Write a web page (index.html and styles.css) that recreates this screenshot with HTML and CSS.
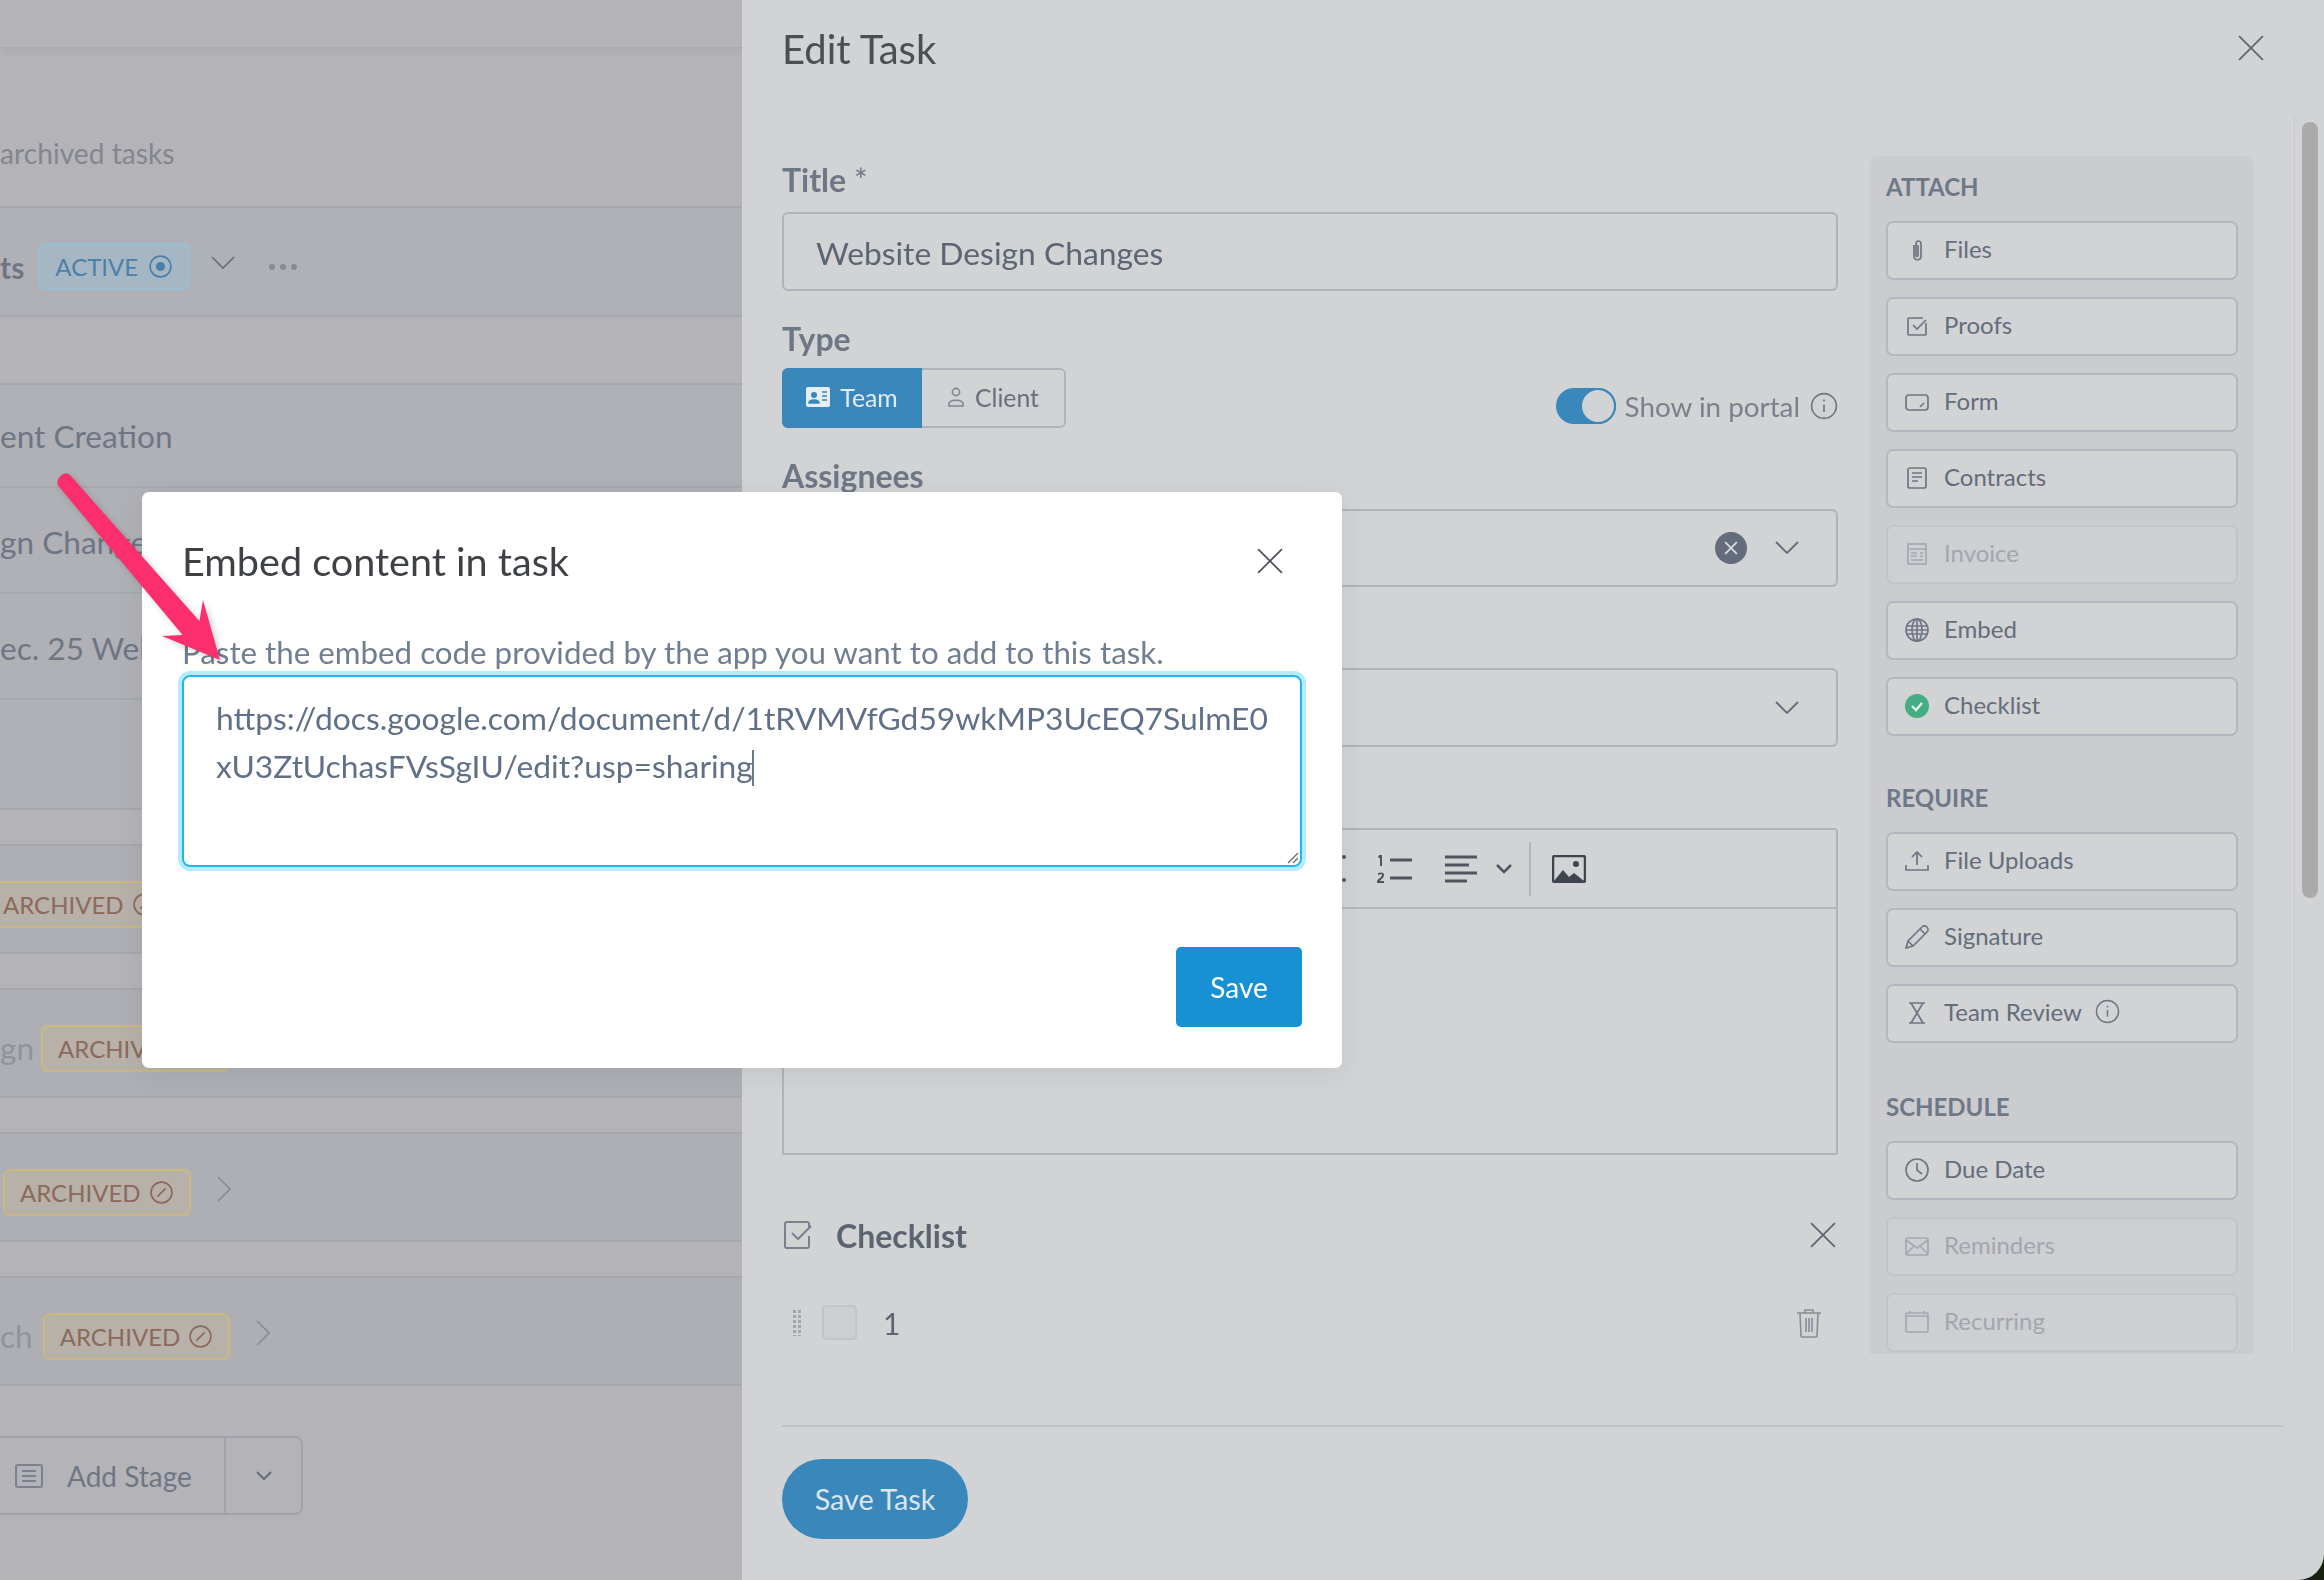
FILE: index.html
```html
<!DOCTYPE html>
<html lang="en">
<head>
<meta charset="utf-8">
<title>Edit Task</title>
<link rel="stylesheet" href="styles.css">
</head>
<body>
<div class="shell">
  <section class="board">
    <div class="board-top"></div>
    <div class="board-note"><span>archived tasks</span></div>
    <div class="row row-badge">
      <strong class="row-name">ts</strong>
      <span class="badge badge-active">ACTIVE
        <svg class="badge-ico" viewBox="0 0 24 24"><circle cx="12" cy="12" r="10"/><circle class="fill" cx="12" cy="12" r="3.6"/></svg>
      </span>
      <svg class="chev-down" viewBox="0 0 24 14"><path d="M1 1l11 11L23 1"/></svg>
      <span class="dots"><i></i><i></i><i></i></span>
    </div>
    <div class="row row-top"><span class="row-name">ent Creation</span></div>
    <div class="row row-stack"><span class="row-name">gn Changes</span></div>
    <div class="row row-stack"><span class="row-name">ec. 25 Web</span></div>
    <div class="row row-stack row-last"></div>
    <div class="row row-badge row-a">
      <span class="badge badge-archived badge-cut">ARCHIVED
        <svg class="badge-ico" viewBox="0 0 24 24"><circle cx="12" cy="12" r="10"/><path d="M8 16l8-8"/></svg>
      </span>
    </div>
    <div class="row row-badge row-a row-b">
      <span class="row-name row-faint">gn</span>
      <span class="badge badge-archived">ARCHIVED
        <svg class="badge-ico" viewBox="0 0 24 24"><circle cx="12" cy="12" r="10"/><path d="M8 16l8-8"/></svg>
      </span>
    </div>
    <div class="row row-badge row-a row-c">
      <span class="badge badge-archived">ARCHIVED
        <svg class="badge-ico" viewBox="0 0 24 24"><circle cx="12" cy="12" r="10"/><path d="M8 16l8-8"/></svg>
      </span>
      <svg class="chev-right" viewBox="0 0 14 26"><path d="M1 1l12 12L1 25"/></svg>
    </div>
    <div class="row row-badge row-a row-d">
      <span class="row-name row-faint">ch</span>
      <span class="badge badge-archived">ARCHIVED
        <svg class="badge-ico" viewBox="0 0 24 24"><circle cx="12" cy="12" r="10"/><path d="M8 16l8-8"/></svg>
      </span>
      <svg class="chev-right" viewBox="0 0 14 26"><path d="M1 1l12 12L1 25"/></svg>
    </div>
    <div class="add-stage">
      <span class="add-main">
        <svg class="add-ico" viewBox="0 0 28 24"><rect x="1" y="1" width="26" height="22" rx="2"/><path d="M7 7h14M7 12h14M7 17h14"/></svg>
        Add Stage
      </span>
      <span class="add-more"><svg viewBox="0 0 16 10"><path d="M1 1l7 7 7-7"/></svg></span>
    </div>
  </section>

  <section class="panel">
    <header class="panel-head">
      <h2 class="panel-title">Edit Task</h2>
      <svg class="x-ico panel-close" viewBox="0 0 24 24"><path d="M1 1l22 22M23 1L1 23"/></svg>
    </header>

    <div class="panel-body">
      <div class="form">
        <label class="field-label first">Title <span class="star">*</span></label>
        <div class="input">Website Design Changes</div>

        <label class="field-label type-label">Type</label>
        <div class="type-row">
          <div class="seg">
            <span class="seg-item seg-on">
              <svg class="seg-ico" viewBox="0 0 24 20"><rect x="0" y="0" width="24" height="20" rx="2" fill="#e6edf3"/><circle cx="8" cy="8" r="3" fill="#3a87bb"/><path d="M3 16c0-4 10-4 10 0zM16 5h5M16 9h5M16 13h5" fill="#3a87bb" stroke="#3a87bb" stroke-width="1.5"/></svg>
              Team
            </span>
            <span class="seg-item">
              <svg class="seg-ico seg-person" viewBox="0 0 18 20"><circle cx="9" cy="5" r="3.6"/><path d="M2 19v-2c0-5 14-5 14 0v2z"/></svg>
              Client
            </span>
          </div>
          <div class="portal">
            <span class="toggle"><i></i></span>
            <span class="portal-text">Show in portal</span>
            <svg class="info" viewBox="0 0 26 26"><circle cx="13" cy="13" r="11.5"/><path d="M13 11.5v7M13 7v1.8"/></svg>
          </div>
        </div>

        <label class="field-label assign-label">Assignees</label>
        <div class="select">
          <span class="clear"><svg viewBox="0 0 12 12"><path d="M1 1l10 10M11 1L1 11"/></svg></span>
          <svg class="chev-down sel-chev" viewBox="0 0 24 14"><path d="M1 1l11 11L23 1"/></svg>
        </div>
        <div class="select select-second">
          <svg class="chev-down sel-chev" viewBox="0 0 24 14"><path d="M1 1l11 11L23 1"/></svg>
        </div>

        <div class="editor">
          <div class="toolbar">
            <svg class="tb-ul" viewBox="0 0 6 30"><circle cx="2" cy="3" r="2"/><circle cx="2" cy="26" r="2"/></svg>
            <svg class="tb-ol" viewBox="0 0 36 30"><path class="tb-fill" d="M3 1h3v11H4V4H2zM1 29v-2c2-3 5-4 5-6 0-1-2-1-4 0v-2c3-1 6-1 6 2s-3 4-4 6h4v2z"/><path d="M14 6h22M14 24h22"/></svg>
            <svg class="tb-al" viewBox="0 0 32 28"><path d="M0 2h32M0 10h24M0 18h32M0 26h22"/></svg>
            <svg class="tb-chev" viewBox="0 0 16 10"><path d="M1 1l7 7 7-7"/></svg>
            <span class="tb-sep"></span>
            <svg class="tb-img" viewBox="0 0 34 28"><rect x="1" y="1" width="32" height="26" rx="2"/><circle class="tb-dot" cx="24" cy="9" r="3"/><path class="tb-hill" d="M2 26l9-11 6 7 5-4 10 8z"/></svg>
          </div>
        </div>

        <div class="check-head">
          <svg class="check-ico" viewBox="0 0 28 28"><path d="M25 6V3a2 2 0 0 0-2-2H3a2 2 0 0 0-2 2v22a2 2 0 0 0 2 2h20a2 2 0 0 0 2-2V15"/><path d="M8 12l6 6L27 5"/></svg>
          <strong class="check-title">Checklist</strong>
          <svg class="x-ico check-close" viewBox="0 0 24 24"><path d="M1 1l22 22M23 1L1 23"/></svg>
        </div>
        <div class="check-row">
          <span class="grip"></span>
          <span class="box"></span>
          <span class="check-num">1</span>
          <svg class="trash" viewBox="0 0 26 30"><path d="M1 5h24M9 5V2h8v3M4 5l1 23a1 1 0 0 0 1 1h14a1 1 0 0 0 1-1l1-23M10 10v14M13 10v14M16 10v14"/></svg>
        </div>
      </div>

      <aside class="side">
        <h3 class="side-title">ATTACH</h3>
        <div class="tool"><svg class="t-ico" viewBox="0 0 24 24"><path d="M9 7v11c0 5 7 5 7 0V6c0-4-5-4-5 0v11c0 2 2 2 2 0V7"/></svg>Files</div>
        <div class="tool"><svg class="t-ico" viewBox="0 0 24 24"><path d="M21 9v11a1 1 0 0 1-1 1H4a1 1 0 0 1-1-1V5a1 1 0 0 1 1-1h14"/><path d="M8 11l4 4 9-9"/></svg>Proofs</div>
        <div class="tool"><svg class="t-ico" viewBox="0 0 24 24"><rect x="1" y="5" width="22" height="15" rx="3"/><path d="M15 17l4-4"/></svg>Form</div>
        <div class="tool"><svg class="t-ico" viewBox="0 0 24 24"><rect x="3" y="2" width="18" height="20" rx="2"/><path d="M7 7h10M7 11h10M7 15h6"/></svg>Contracts</div>
        <div class="tool tool-off"><svg class="t-ico" viewBox="0 0 24 24"><rect x="3" y="2" width="18" height="20"/><path d="M3 7h18M6 11h6M15 11h3M6 14h6M15 14h3M6 18h12"/></svg>Invoice</div>
        <div class="tool"><svg class="t-ico" viewBox="0 0 24 24"><circle cx="12" cy="12" r="11"/><ellipse cx="12" cy="12" rx="5" ry="11"/><path d="M12 1v22M2 8h20M2 16h20M1 12h22"/></svg>Embed</div>
        <div class="tool"><svg class="t-ico t-done" viewBox="0 0 24 24"><circle cx="12" cy="12" r="12"/><path d="M7 12l4 4 6-7"/></svg>Checklist</div>

        <h3 class="side-title side-next">REQUIRE</h3>
        <div class="tool"><svg class="t-ico" viewBox="0 0 24 24"><path d="M12 16V3M7 8l5-5 5 5M1 16v5h22v-5"/></svg>File Uploads</div>
        <div class="tool"><svg class="t-ico" viewBox="0 0 24 24"><path d="M1 23l2-7L17 2a2.8 2.8 0 0 1 5 5L8 21zM3 16l5 5M15 4l5 5"/></svg>Signature</div>
        <div class="tool"><svg class="t-ico" viewBox="0 0 24 24"><path d="M4 2h16M4 22h16M6 2l12 20M18 2L6 22"/></svg>Team Review<svg class="info t-info" viewBox="0 0 26 26"><circle cx="13" cy="13" r="11.5"/><path d="M13 11.5v7M13 7v1.8"/></svg></div>

        <h3 class="side-title side-next side-sched">SCHEDULE</h3>
        <div class="tool"><svg class="t-ico" viewBox="0 0 24 24"><circle cx="12" cy="12" r="11"/><path d="M12 5v7l5 4"/></svg>Due Date</div>
        <div class="tool tool-off"><svg class="t-ico" viewBox="0 0 24 24"><rect x="1" y="4" width="22" height="17" rx="2"/><path d="M1 6l11 8 11-8M1 20l8-8M23 20l-8-8"/></svg>Reminders</div>
        <div class="tool tool-off"><svg class="t-ico" viewBox="0 0 24 24"><rect x="1" y="3" width="22" height="19" rx="1"/><path d="M1 6h22M5 1v3M19 1v3"/></svg>Recurring</div>
      </aside>

      <div class="scroll"><span class="thumb"></span></div>
    </div>

    <footer class="panel-foot">
      <span class="save-task">Save Task</span>
    </footer>
  </section>
</div>

<div class="modal">
  <div class="modal-head">
    <h2 class="modal-title">Embed content in task</h2>
    <svg class="x-ico modal-close" viewBox="0 0 24 24"><path d="M1 1l22 22M23 1L1 23"/></svg>
  </div>
  <p class="modal-text">Paste the embed code provided by the app you want to add to this task.</p>
  <div class="area">https://docs.google.com/document/d/1tRVMVfGd59wkMP3UcEQ7SulmE0<br>xU3ZtUchasFVsSgIU/edit?usp=sharing<span class="caret"></span>
    <svg class="resize" viewBox="0 0 14 14"><path d="M13 3L3 13M13 8l-5 5"/></svg>
  </div>
  <div class="modal-foot"><span class="save">Save</span></div>
</div>

<svg class="arrow" viewBox="0 0 240 200">
  <path d="M2 13.5C-1 7 8 -2 14 3L143.400 149 147 128 164 188 106 164 126.600 163z"/>
</svg>
</body>
</html>
```
FILE: styles.css
```css
* { box-sizing: border-box; }
html, body { margin: 0; height: 100%; }
body {
  width: 2324px;
  height: 1580px;
  overflow: hidden;
  position: relative;
  background: #16210f;
  font-family: Lato, "Liberation Sans", sans-serif;
  color: #6b7585;
}
.shell { display: flex; width: 2324px; height: 1580px; filter: blur(.5px); }

/* left board */
.board { width: 742px; height: 1580px; background: #b4b4b8; overflow: hidden; flex: none; }
.board-top { height: 48px; border-bottom: 1px solid #a9a9ad; box-shadow: 0 4px 8px rgba(0,0,0,.05); }
.board-note { height: 158px; padding-top: 87px; font-size: 28.2px; line-height: 36px; color: #83868f; }
.row {
  display: flex;
  align-items: center;
  background: #b0b1b6;
  border-top: 2px solid #a6a8af;
  border-bottom: 2px solid #a6a8af;
  height: 111px;
  font-size: 31.6px;
  color: #6e7684;
}
.row-badge { padding-top: 10px; }
.row-top { margin-top: 66px; height: 105px; }
.row-stack { margin-top: -2px; height: 108px; padding-top: 4px; }
.row-last { height: 112px; }
.row-a { margin-top: 34px; height: 110px; background: #aeafb4; }
.row-name { flex: none; }
.row-faint { color: #8f939c; }
strong.row-name { font-weight: 700; font-size: 30px; }
.badge {
  display: inline-flex;
  align-items: center;
  gap: 8px;
  height: 47px;
  padding: 0 15px;
  border-radius: 7px;
  font-size: 24px;
  margin-left: 15px;
}
.badge-active { gap: 10px; margin-left: 14px; background: #a5b7c5; border: 2px solid #9cbcd3; color: #4d7fa7; }
.badge-archived { background: #b7b1a9; border: 2px solid #cab87f; color: #8c6a5b; }
.badge-cut { margin-left: -14px; }
.row-b .badge { margin-left: 7px; }
.row-c .badge { margin-left: 3px; }
.row-d .badge { margin-left: 10px; }
.badge-ico { width: 25px; height: 25px; fill: none; stroke: currentColor; stroke-width: 1.6; }
.badge-ico .fill { fill: currentColor; }
.chev-down { width: 24px; height: 14px; fill: none; stroke: #666d7a; stroke-width: 1.6; }
.row .chev-down { margin: -8px 0 0 21px; }
.dots { display: flex; gap: 5px; margin-left: 34px; }
.dots i { width: 6px; height: 6px; border-radius: 50%; background: #858b98; }
.chev-right { width: 14px; height: 26px; margin: -6px 0 0 26px; fill: none; stroke: #868c9a; stroke-width: 1.6; }
.add-stage {
  display: flex;
  width: 315px;
  height: 79px;
  margin: 50px 0 0 -12px;
  border: 2px solid #a0a3ac;
  border-radius: 0 8px 8px 0;
  font-size: 28px;
  color: #6e7684;
}
.add-main { display: flex; align-items: center; gap: 24px; width: 236px; padding-left: 25px; border-right: 2px solid #a0a3ac; }
.add-ico { width: 28px; height: 24px; fill: none; stroke: #7b828f; stroke-width: 2; flex: none; }
.add-more { display: flex; align-items: center; justify-content: center; flex: 1; }
.add-more svg { width: 16px; height: 10px; fill: none; stroke: #666d7a; stroke-width: 2; }

/* right panel */
.panel { flex: 1; display: flex; flex-direction: column; height: 1580px; background: #d2d3d5; border-radius: 0 0 26px 0; overflow: hidden; }
.panel-head { height: 116px; padding: 22px 60px 0 40px; display: flex; justify-content: space-between; align-items: flex-start; }
.panel-title { margin: 0; font-size: 40px; line-height: 54px; font-weight: 400; color: #4b4e55; }
.x-ico { fill: none; stroke: #5e6470; stroke-width: 1.6; flex: none; }
.panel-close { width: 26px; height: 26px; margin: 13px 0 0 0; }
.panel-body { height: 1238px; display: flex; padding-left: 40px; overflow: hidden; flex: none; }
.form { width: 1056px; flex: none; }
.field-label { display: block; font-size: 32px; line-height: 36px; font-weight: 700; color: #6f7785; }
.field-label.first { margin-top: 46px; }
.star { font-weight: 400; }
.input {
  height: 79px;
  margin-top: 14px;
  padding: 2px 32px 0;
  display: flex;
  align-items: center;
  border: 2px solid #b0b3bc;
  border-radius: 6px;
  font-size: 31.8px;
  color: #5c6573;
}
.type-label { margin-top: 30px; }
.type-row { display: flex; justify-content: space-between; margin-top: 11px; height: 60px; }
.seg { display: flex; width: 284px; height: 60px; border: 2px solid #b0b3bc; border-radius: 6px; }
.seg-item { display: flex; align-items: center; gap: 10px; flex: 1; justify-content: center; padding-bottom: 2px; font-size: 24.8px; color: #666f7d; }
.seg-on { flex: none; width: 140px; margin: -2px 0 -2px -2px; background: #3a87bb; color: #e3ecf2; border-radius: 6px 0 0 6px; }
.seg-ico { width: 24px; height: 20px; }
.seg-person { width: 18px; fill: none; stroke: #808793; stroke-width: 1.6; }
.portal { display: flex; align-items: center; height: 60px; padding-top: 16px; }
.toggle { width: 60px; height: 36px; border-radius: 18px; background: #3a87bb; position: relative; display: block; }
.toggle i { position: absolute; right: 0; top: 0; width: 36px; height: 36px; border-radius: 50%; background: #d2d3d5; border: 2px solid #3a87bb; }
.portal-text { margin-left: 9px; font-size: 27.8px; color: #7a808c; }
.info { width: 28px; height: 28px; margin-left: 10px; fill: none; stroke: #6d7482; stroke-width: 1.5; flex: none; }
.assign-label { margin-top: 30px; }
.select {
  height: 78px;
  margin-top: 15px;
  display: flex;
  align-items: center;
  justify-content: flex-end;
  padding-right: 37px;
  border: 2px solid #b0b3bc;
  border-radius: 6px;
}
.select-second { margin-top: 81px; height: 79px; }
.clear { display: flex; align-items: center; justify-content: center; width: 32px; height: 32px; border-radius: 50%; background: #646c7b; margin-right: 28px; }
.clear svg { width: 14px; height: 14px; stroke: #d8dade; stroke-width: 1.6; fill: none; }
.sel-chev { stroke-width: 1.8; }
.editor { height: 327px; margin-top: 81px; border: 2px solid #b0b3bc; border-radius: 4px 4px 2px 2px; }
.toolbar { height: 79px; display: flex; align-items: center; padding-left: 558px; border-bottom: 2px solid #b4b6bd; }
.tb-ul { width: 6px; height: 30px; fill: #4e5561; }
.tb-ol { width: 36px; height: 30px; margin-left: 28px; stroke: #4e5561; stroke-width: 3; fill: none; }
.tb-fill { fill: #4e5561; stroke: none; }
.tb-al { width: 32px; height: 28px; margin-left: 33px; stroke: #4e5561; stroke-width: 3; fill: none; }
.tb-chev { width: 16px; height: 10px; margin-left: 19px; stroke: #4e5561; stroke-width: 2.5; fill: none; }
.tb-sep { width: 2px; height: 54px; margin-left: 17px; background: #b4b6bd; }
.tb-img { width: 34px; height: 28px; margin-left: 21px; fill: none; stroke: #3f454f; stroke-width: 2.5; }
.tb-dot, .tb-hill { fill: #3f454f; stroke: none; }
.check-head { display: flex; align-items: center; margin-top: 62px; height: 36px; }
.check-ico { width: 28px; height: 28px; margin-left: 2px; fill: none; stroke: #7a808d; stroke-width: 2; flex: none; }
.check-title { margin-left: 24px; font-size: 32px; font-weight: 700; color: #5c6472; }
.check-close { width: 26px; height: 26px; margin-left: auto; margin-right: 2px; }
.check-row { display: flex; align-items: center; margin-top: 52px; height: 35px; }
.grip {
  width: 10px;
  height: 27px;
  margin-left: 10px;
  background-image: radial-gradient(circle, #a3a6ae 1.6px, transparent 1.8px);
  background-size: 5px 5px;
  flex: none;
}
.box { width: 35px; height: 35px; margin-left: 20px; border: 2px solid #c2c4ca; border-radius: 4px; background: #cdced1; flex: none; }
.check-num { margin-left: 26px; font-size: 30px; color: #5c6472; }
.trash { width: 26px; height: 30px; margin-left: auto; margin-right: 16px; fill: none; stroke: #878c98; stroke-width: 1.6; }

.side { width: 384px; height: 1238px; margin: 40px 0 0 32px; padding: 0 16px; background: #cbccd0; border-radius: 8px 8px 0 0; flex: none; }
.side-title { margin: 16px 0 0; font-size: 24px; line-height: 30px; font-weight: 700; color: #6f7887; }
.side-next { margin-top: 47px; }
.side-sched { margin-top: 49px; }
.side-title + .tool { margin-top: 19px; }
.tool {
  display: flex;
  align-items: center;
  height: 59px;
  margin-top: 17px;
  padding: 0 0 4px 56px;
  position: relative;
  background: #d2d3d5;
  border: 2px solid #b4b7c0;
  border-radius: 7px;
  font-size: 24px;
  color: #646d7b;
}
.t-ico { position: absolute; left: 17px; top: 15px; width: 24px; height: 24px; fill: none; stroke: #6f7684; stroke-width: 1.7; }
.t-done circle { fill: #44ad83; stroke: none; }
.t-done path { stroke: #e8f2ee; stroke-width: 2.4; }
.tool-off { background: #cecfd3; border-color: #c2c4ca; color: #a3a6ae; }
.tool-off .t-ico { stroke: #a5a8b1; }
.t-info { width: 25px; height: 25px; margin-left: 13px; }
.scroll { width: 30px; height: 1238px; margin-left: 40px; padding: 6px 0 0 7px; border-left: 1px solid #c6c7cb; flex: none; }
.thumb { display: block; width: 16px; height: 776px; border-radius: 8px; background: #aaaaab; }
.panel-foot { margin: 71px 40px 0 40px; padding-top: 32px; border-top: 2px solid #c3c4ca; }
.save-task {
  display: flex;
  align-items: center;
  justify-content: center;
  width: 186px;
  height: 80px;
  border-radius: 40px;
  background: #3a87bb;
  color: #dbe6ed;
  font-size: 28.8px;
}

/* modal */
.modal {
  position: absolute;
  left: 142px;
  top: 492px;
  width: 1200px;
  height: 576px;
  padding: 0 40px;
  background: #fff;
  border-radius: 7px;
  box-shadow: 0 6px 30px rgba(0,0,0,.07);
}
.modal-head { display: flex; justify-content: space-between; align-items: center; padding-top: 41px; height: 97px; }
.modal-title { margin: 0; font-size: 39.6px; line-height: 56px; font-weight: 400; color: #3e4145; }
.modal-close { width: 26px; height: 26px; margin: 0 19px 0 0; stroke: #4d525b; }
.modal-text { margin: 41px 0 0; font-size: 31.3px; line-height: 44px; color: #6f7e90; }
.area {
  position: relative;
  width: 1120px;
  height: 192px;
  margin-top: 1px;
  padding: 17px 20px 0 32px;
  border: 2px solid #1fb5ee;
  border-radius: 8px;
  box-shadow: 0 0 0 4px #b5ebff;
  font-size: 31.8px;
  line-height: 48px;
  color: #5f7087;
  white-space: nowrap;
}
.caret { display: inline-block; width: 2px; height: 36px; margin-left: -1px; background: #6d7a8a; vertical-align: -8px; }
.resize { position: absolute; right: 1px; bottom: 1px; width: 14px; height: 14px; fill: none; stroke: #666; stroke-width: 1.2; }
.modal-foot { display: flex; justify-content: flex-end; margin-top: 80px; }
.save {
  display: flex;
  align-items: center;
  justify-content: center;
  width: 126px;
  height: 80px;
  background: #1791d4;
  border-radius: 5px;
  color: #fff;
  font-size: 28px;
}

.arrow { position: absolute; left: 56px; top: 472px; width: 240px; height: 200px; fill: #fb2f6e; filter: drop-shadow(3px 3px 3px rgba(0,0,0,.18)); }
```
